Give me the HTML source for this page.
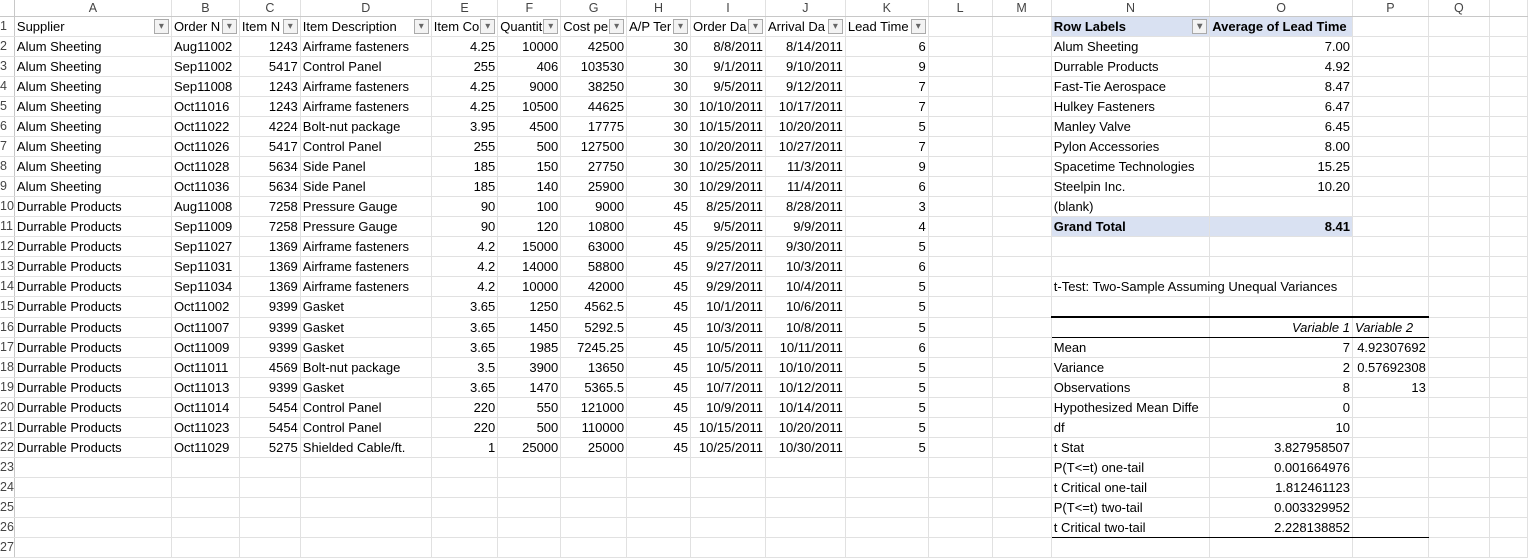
<!DOCTYPE html>
<html><head><meta charset="utf-8"><style>
body{margin:0;width:1528px;height:555px;overflow:hidden;background:#fff;font-family:"Liberation Sans",Arial,sans-serif;font-size:13px;color:#000}
table{border-collapse:collapse;table-layout:fixed;position:absolute;left:0;top:0}
td{height:19px;padding:0 2px;border-right:1px solid #e1e1e1;border-bottom:1px solid #e1e1e1;white-space:nowrap;overflow:hidden;line-height:19px}
tr.h td{height:16px;line-height:16px;color:#444;text-align:center;background:#fff;border-bottom:1px solid #c8c8c8;font-size:12.5px}
td.n{color:#444;text-align:left;direction:rtl;padding:0;font-size:12.5px;border-right:1px solid #c8c8c8;overflow:hidden}
.r{text-align:right}
td.f{position:relative;padding-right:18px}
td.f:after{content:"▾";position:absolute;right:2px;top:2px;width:13px;height:13px;border:1px solid #aaa;background:#f3f3f3;color:#666;font-size:10px;line-height:13px;text-align:center}
.pv{background:#d9e1f2;font-weight:bold}
.gt{border-top:1px solid #8ea9db}
.tt{border-top:2px solid #000}
.tb{border-bottom:1px solid #000}
.bb{border-bottom:1px solid #000}
i{font-style:italic}
</style></head><body>
<table>
<colgroup><col style="width:12px"><col style="width:160px"><col style="width:68px"><col style="width:61px"><col style="width:132px"><col style="width:65px"><col style="width:63px"><col style="width:64px"><col style="width:64px"><col style="width:75px"><col style="width:80px"><col style="width:83px"><col style="width:67px"><col style="width:62px"><col style="width:159px"><col style="width:143px"><col style="width:76px"><col style="width:64px"><col style="width:40px"></colgroup>
<tr class="h"><td class="n"></td><td>A</td><td>B</td><td>C</td><td>D</td><td>E</td><td>F</td><td>G</td><td>H</td><td>I</td><td>J</td><td>K</td><td>L</td><td>M</td><td>N</td><td>O</td><td>P</td><td>Q</td><td></td></tr>
<tr><td class="n">1</td><td class="f">Supplier</td><td class="f">Order N</td><td class="f">Item N</td><td class="f">Item Description</td><td class="f">Item Co</td><td class="f">Quantit</td><td class="f">Cost pe</td><td class="f">A/P Ter</td><td class="f">Order Da</td><td class="f">Arrival Da</td><td class="f">Lead Time</td><td></td><td></td><td class="pv f">Row Labels</td><td class="pv">Average of Lead Time</td><td></td><td></td><td></td></tr>
<tr><td class="n">2</td><td>Alum Sheeting</td><td>Aug11002</td><td class="r">1243</td><td>Airframe fasteners</td><td class="r">4.25</td><td class="r">10000</td><td class="r">42500</td><td class="r">30</td><td class="r">8/8/2011</td><td class="r">8/14/2011</td><td class="r">6</td><td></td><td></td><td>Alum Sheeting</td><td class="r">7.00</td><td></td><td></td><td></td></tr>
<tr><td class="n">3</td><td>Alum Sheeting</td><td>Sep11002</td><td class="r">5417</td><td>Control Panel</td><td class="r">255</td><td class="r">406</td><td class="r">103530</td><td class="r">30</td><td class="r">9/1/2011</td><td class="r">9/10/2011</td><td class="r">9</td><td></td><td></td><td>Durrable Products</td><td class="r">4.92</td><td></td><td></td><td></td></tr>
<tr><td class="n">4</td><td>Alum Sheeting</td><td>Sep11008</td><td class="r">1243</td><td>Airframe fasteners</td><td class="r">4.25</td><td class="r">9000</td><td class="r">38250</td><td class="r">30</td><td class="r">9/5/2011</td><td class="r">9/12/2011</td><td class="r">7</td><td></td><td></td><td>Fast-Tie Aerospace</td><td class="r">8.47</td><td></td><td></td><td></td></tr>
<tr><td class="n">5</td><td>Alum Sheeting</td><td>Oct11016</td><td class="r">1243</td><td>Airframe fasteners</td><td class="r">4.25</td><td class="r">10500</td><td class="r">44625</td><td class="r">30</td><td class="r">10/10/2011</td><td class="r">10/17/2011</td><td class="r">7</td><td></td><td></td><td>Hulkey Fasteners</td><td class="r">6.47</td><td></td><td></td><td></td></tr>
<tr><td class="n">6</td><td>Alum Sheeting</td><td>Oct11022</td><td class="r">4224</td><td>Bolt-nut package</td><td class="r">3.95</td><td class="r">4500</td><td class="r">17775</td><td class="r">30</td><td class="r">10/15/2011</td><td class="r">10/20/2011</td><td class="r">5</td><td></td><td></td><td>Manley Valve</td><td class="r">6.45</td><td></td><td></td><td></td></tr>
<tr><td class="n">7</td><td>Alum Sheeting</td><td>Oct11026</td><td class="r">5417</td><td>Control Panel</td><td class="r">255</td><td class="r">500</td><td class="r">127500</td><td class="r">30</td><td class="r">10/20/2011</td><td class="r">10/27/2011</td><td class="r">7</td><td></td><td></td><td>Pylon Accessories</td><td class="r">8.00</td><td></td><td></td><td></td></tr>
<tr><td class="n">8</td><td>Alum Sheeting</td><td>Oct11028</td><td class="r">5634</td><td>Side Panel</td><td class="r">185</td><td class="r">150</td><td class="r">27750</td><td class="r">30</td><td class="r">10/25/2011</td><td class="r">11/3/2011</td><td class="r">9</td><td></td><td></td><td>Spacetime Technologies</td><td class="r">15.25</td><td></td><td></td><td></td></tr>
<tr><td class="n">9</td><td>Alum Sheeting</td><td>Oct11036</td><td class="r">5634</td><td>Side Panel</td><td class="r">185</td><td class="r">140</td><td class="r">25900</td><td class="r">30</td><td class="r">10/29/2011</td><td class="r">11/4/2011</td><td class="r">6</td><td></td><td></td><td>Steelpin Inc.</td><td class="r">10.20</td><td></td><td></td><td></td></tr>
<tr><td class="n">10</td><td>Durrable Products</td><td>Aug11008</td><td class="r">7258</td><td>Pressure Gauge</td><td class="r">90</td><td class="r">100</td><td class="r">9000</td><td class="r">45</td><td class="r">8/25/2011</td><td class="r">8/28/2011</td><td class="r">3</td><td></td><td></td><td>(blank)</td><td></td><td></td><td></td><td></td></tr>
<tr><td class="n">11</td><td>Durrable Products</td><td>Sep11009</td><td class="r">7258</td><td>Pressure Gauge</td><td class="r">90</td><td class="r">120</td><td class="r">10800</td><td class="r">45</td><td class="r">9/5/2011</td><td class="r">9/9/2011</td><td class="r">4</td><td></td><td></td><td class="pv gt">Grand Total</td><td class="pv gt r">8.41</td><td></td><td></td><td></td></tr>
<tr><td class="n">12</td><td>Durrable Products</td><td>Sep11027</td><td class="r">1369</td><td>Airframe fasteners</td><td class="r">4.2</td><td class="r">15000</td><td class="r">63000</td><td class="r">45</td><td class="r">9/25/2011</td><td class="r">9/30/2011</td><td class="r">5</td><td></td><td></td><td></td><td></td><td></td><td></td><td></td></tr>
<tr><td class="n">13</td><td>Durrable Products</td><td>Sep11031</td><td class="r">1369</td><td>Airframe fasteners</td><td class="r">4.2</td><td class="r">14000</td><td class="r">58800</td><td class="r">45</td><td class="r">9/27/2011</td><td class="r">10/3/2011</td><td class="r">6</td><td></td><td></td><td></td><td></td><td></td><td></td><td></td></tr>
<tr><td class="n">14</td><td>Durrable Products</td><td>Sep11034</td><td class="r">1369</td><td>Airframe fasteners</td><td class="r">4.2</td><td class="r">10000</td><td class="r">42000</td><td class="r">45</td><td class="r">9/29/2011</td><td class="r">10/4/2011</td><td class="r">5</td><td></td><td></td><td colspan="2" style="overflow:visible">t-Test: Two-Sample Assuming Unequal Variances</td><td></td><td></td><td></td></tr>
<tr><td class="n">15</td><td>Durrable Products</td><td>Oct11002</td><td class="r">9399</td><td>Gasket</td><td class="r">3.65</td><td class="r">1250</td><td class="r">4562.5</td><td class="r">45</td><td class="r">10/1/2011</td><td class="r">10/6/2011</td><td class="r">5</td><td></td><td></td><td class="bb"></td><td class="bb"></td><td class="bb"></td><td></td><td></td></tr>
<tr><td class="n">16</td><td>Durrable Products</td><td>Oct11007</td><td class="r">9399</td><td>Gasket</td><td class="r">3.65</td><td class="r">1450</td><td class="r">5292.5</td><td class="r">45</td><td class="r">10/3/2011</td><td class="r">10/8/2011</td><td class="r">5</td><td></td><td></td><td class="tt tb"></td><td class="tt tb r"><i>Variable 1</i></td><td class="tt tb"><i>Variable 2</i></td><td></td><td></td></tr>
<tr><td class="n">17</td><td>Durrable Products</td><td>Oct11009</td><td class="r">9399</td><td>Gasket</td><td class="r">3.65</td><td class="r">1985</td><td class="r">7245.25</td><td class="r">45</td><td class="r">10/5/2011</td><td class="r">10/11/2011</td><td class="r">6</td><td></td><td></td><td>Mean</td><td class="r">7</td><td class="r">4.92307692</td><td></td><td></td></tr>
<tr><td class="n">18</td><td>Durrable Products</td><td>Oct11011</td><td class="r">4569</td><td>Bolt-nut package</td><td class="r">3.5</td><td class="r">3900</td><td class="r">13650</td><td class="r">45</td><td class="r">10/5/2011</td><td class="r">10/10/2011</td><td class="r">5</td><td></td><td></td><td>Variance</td><td class="r">2</td><td class="r">0.57692308</td><td></td><td></td></tr>
<tr><td class="n">19</td><td>Durrable Products</td><td>Oct11013</td><td class="r">9399</td><td>Gasket</td><td class="r">3.65</td><td class="r">1470</td><td class="r">5365.5</td><td class="r">45</td><td class="r">10/7/2011</td><td class="r">10/12/2011</td><td class="r">5</td><td></td><td></td><td>Observations</td><td class="r">8</td><td class="r">13</td><td></td><td></td></tr>
<tr><td class="n">20</td><td>Durrable Products</td><td>Oct11014</td><td class="r">5454</td><td>Control Panel</td><td class="r">220</td><td class="r">550</td><td class="r">121000</td><td class="r">45</td><td class="r">10/9/2011</td><td class="r">10/14/2011</td><td class="r">5</td><td></td><td></td><td>Hypothesized Mean Diffe</td><td class="r">0</td><td></td><td></td><td></td></tr>
<tr><td class="n">21</td><td>Durrable Products</td><td>Oct11023</td><td class="r">5454</td><td>Control Panel</td><td class="r">220</td><td class="r">500</td><td class="r">110000</td><td class="r">45</td><td class="r">10/15/2011</td><td class="r">10/20/2011</td><td class="r">5</td><td></td><td></td><td>df</td><td class="r">10</td><td></td><td></td><td></td></tr>
<tr><td class="n">22</td><td>Durrable Products</td><td>Oct11029</td><td class="r">5275</td><td>Shielded Cable/ft.</td><td class="r">1</td><td class="r">25000</td><td class="r">25000</td><td class="r">45</td><td class="r">10/25/2011</td><td class="r">10/30/2011</td><td class="r">5</td><td></td><td></td><td>t Stat</td><td class="r">3.827958507</td><td></td><td></td><td></td></tr>
<tr><td class="n">23</td><td></td><td></td><td></td><td></td><td></td><td></td><td></td><td></td><td></td><td></td><td></td><td></td><td></td><td>P(T&lt;=t) one-tail</td><td class="r">0.001664976</td><td></td><td></td><td></td></tr>
<tr><td class="n">24</td><td></td><td></td><td></td><td></td><td></td><td></td><td></td><td></td><td></td><td></td><td></td><td></td><td></td><td>t Critical one-tail</td><td class="r">1.812461123</td><td></td><td></td><td></td></tr>
<tr><td class="n">25</td><td></td><td></td><td></td><td></td><td></td><td></td><td></td><td></td><td></td><td></td><td></td><td></td><td></td><td>P(T&lt;=t) two-tail</td><td class="r">0.003329952</td><td></td><td></td><td></td></tr>
<tr><td class="n">26</td><td></td><td></td><td></td><td></td><td></td><td></td><td></td><td></td><td></td><td></td><td></td><td></td><td></td><td class="bb">t Critical two-tail</td><td class="bb r">2.228138852</td><td class="bb"></td><td></td><td></td></tr>
<tr><td class="n">27</td><td></td><td></td><td></td><td></td><td></td><td></td><td></td><td></td><td></td><td></td><td></td><td></td><td></td><td></td><td></td><td></td><td></td><td></td></tr>
</table>
</body></html>
